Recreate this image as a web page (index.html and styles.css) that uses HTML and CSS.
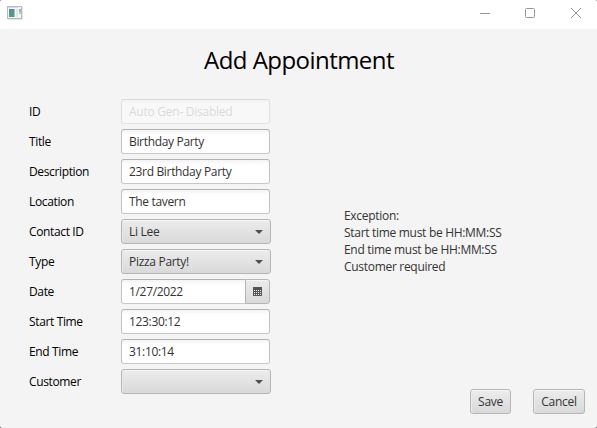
FILE: index.html
```html
<!DOCTYPE html>
<html lang="en">
<head>
<meta charset="utf-8">
<title>Add Appointment</title>
<link rel="stylesheet" href="styles.css">
</head>
<body>
<div class="window">
  <header class="titlebar">
    <svg class="app-icon" width="16" height="14" viewBox="0 0 16 14">
      <defs><linearGradient id="pane" x1="0" y1="0" x2="0" y2="1"><stop offset="0" stop-color="#5a87ad"/><stop offset="1" stop-color="#4aa673"/></linearGradient></defs>
      <rect x="0.5" y="0.5" width="14" height="12" fill="#f4f5f5" stroke="#b4babd"/>
      <path d="M1 13.5H15.5V1" fill="none" stroke="#e3e3e3"/>
      <path d="M1 1.5H11" stroke="#d4dade"/>
      <rect x="2" y="3" width="5" height="8" fill="url(#pane)"/>
      <path d="M7.5 3V11" stroke="#b9bfbf"/>
      <rect x="9" y="3" width="2" height="8" fill="#e4e6e6"/>
      <rect x="12" y="3" width="2" height="3" fill="#8db4d0"/><rect x="12" y="6" width="2" height="2" fill="#b5d8a4"/>
    </svg>
    <svg class="controls" width="104" height="12" viewBox="0 0 104 12" fill="none" stroke="#969696">
      <path d="M0 6.5H10"/>
      <rect x="45.5" y="1.5" width="9" height="9" rx="1"/>
      <path d="M91 1L101 11M101 1L91 11"/>
    </svg>
  </header>
  <main class="content">
    <h1 class="heading">Add Appointment</h1>
    <div class="columns">
      <form class="form">
        <span class="label">ID</span><div class="field disabled"><span>Auto Gen- Disabled</span></div>
        <span class="label">Title</span><div class="field"><span>Birthday Party</span></div>
        <span class="label">Description</span><div class="field"><span>23rd Birthday Party</span></div>
        <span class="label">Location</span><div class="field"><span>The tavern</span></div>
        <span class="label">Contact ID</span><div class="combo"><span>Li Lee</span><i class="arrow"></i></div>
        <span class="label">Type</span><div class="combo"><span>Pizza Party!</span><i class="arrow"></i></div>
        <span class="label">Date</span>
        <div class="date"><div class="field"><span>1/27/2022</span></div>
          <div class="picker"><svg width="9" height="9" viewBox="0 0 9 9"><path d="M0 0H9V9H0Z" fill="#555"/><path d="M1 3.5H8M1 5.5H8M1 7.5H8" stroke="#eee" stroke-dasharray="1 1"/></svg></div></div>
        <span class="label">Start Time</span><div class="field"><span>123:30:12</span></div>
        <span class="label">End Time</span><div class="field"><span>31:10:14</span></div>
        <span class="label">Customer</span><div class="combo"><i class="arrow"></i></div>
      </form>
      <section class="side">
        <p class="message">Exception:<br>Start time must be HH:MM:SS<br>End time must be HH:MM:SS<br>Customer required</p>
        <div class="actions"><div class="button save">Save</div><div class="button cancel">Cancel</div></div>
      </section>
    </div>
  </main>
</div>
</body>
</html>
```
FILE: styles.css
```css
* { box-sizing: border-box; }
body { margin: 0; background: #444; font: 12px/17px "Open Sans", "Noto Sans", sans-serif; letter-spacing: -0.3px; color: #333; }
.window { width: 597px; height: 428px; background: #f4f4f4; border-radius: 2px; overflow: hidden; display: flex; flex-direction: column; }
.titlebar { height: 29px; background: #fff; display: flex; justify-content: space-between; padding: 6px 13px 0 7px; }
.controls { margin-top: 1px; }
.content { flex: 1; display: flex; flex-direction: column; }
.heading { margin: 13px 0 0 1px; height: 57px; font-size: 24px; font-weight: 400; line-height: 36px; text-align: center; color: #000; letter-spacing: -0.55px; }
.columns { display: flex; flex: 1; }
.form { width: 271px; padding-left: 29px; display: grid; grid-template-columns: 92px 150px; grid-auto-rows: 25px; row-gap: 5px; align-content: start; }
.label { color: #000; line-height: 25px; white-space: nowrap; letter-spacing: -0.36px; }
.field { width: 149px; height: 25px; padding: 0 7px; line-height: 23px; border: 1px solid; border-color: #b3b3b3 #c1c1c1 #c8c8c8; border-radius: 3px; background: linear-gradient(#f3f3f3, #fff 5px); white-space: nowrap; }
.field span { letter-spacing: -0.33px; }
.disabled { opacity: .4; }
.disabled span { opacity: .38; letter-spacing: -0.25px; }
.combo { height: 25px; padding: 0 7px; line-height: 23px; display: flex; align-items: center; justify-content: space-between; border: 1px solid #b5b5b5; border-radius: 3px; background: linear-gradient(#ececec, #d9d9d9); box-shadow: inset 0 1px #f6f6f6, inset 1px 0 #e8e8e8; }
.arrow { margin-left: auto; border: 4px solid transparent; border-top-color: #505050; border-bottom: 0; }
.date { display: flex; width: 149px; }
.date .field { width: 124px; border-right: 0; border-radius: 3px 0 0 3px; }
.picker { width: 25px; height: 25px; display: flex; align-items: center; justify-content: center; border: 1px solid #b5b5b5; border-radius: 0 3px 3px 0; background: linear-gradient(#ececec, #d9d9d9); box-shadow: inset 0 1px #f6f6f6; }
.side { flex: 1; padding-right: 12px; display: flex; flex-direction: column; }
.message { margin: 108px 0 0 73px; white-space: nowrap; }
.actions { margin-top: 114px; display: flex; justify-content: flex-end; gap: 22px; }
.button { height: 25px; line-height: 23px; text-align: center; border: 1px solid #b5b5b5; border-radius: 3px; background: linear-gradient(#ececec, #d9d9d9); box-shadow: inset 0 1px #f8f8f8, inset 1px 0 #ededed; }
.save { width: 41px; }
.cancel { width: 52px; }
```
